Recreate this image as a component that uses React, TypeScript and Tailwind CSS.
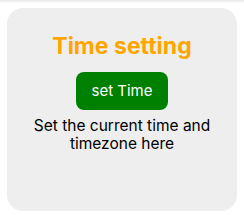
import React from 'react';

export default function App() {
  return (
    <div className="w-[244px] h-[215px] bg-white font-['Inter']">
      <div className="h-[3px] bg-gradient-to-b from-[#e6e6e6] to-white" />
      <div className="px-[7px] pt-[5px]">
        <div className="h-[203px] rounded-[16px] bg-[#eeeeee] flex flex-col items-center pt-[24px]">
          <h2 className="text-[23px] leading-[28px] font-bold text-[#ffa500]">Time setting</h2>
          <button className="mt-[12px] w-[92px] h-[38px] rounded-[8px] bg-[#008000] text-white text-[15px]">
            set Time
          </button>
          <p className="mt-[7px] text-[15.5px] leading-[18px] text-black text-center">
            Set the current time and
            <br />
            timezone here
          </p>
        </div>
      </div>
    </div>
  );
}
